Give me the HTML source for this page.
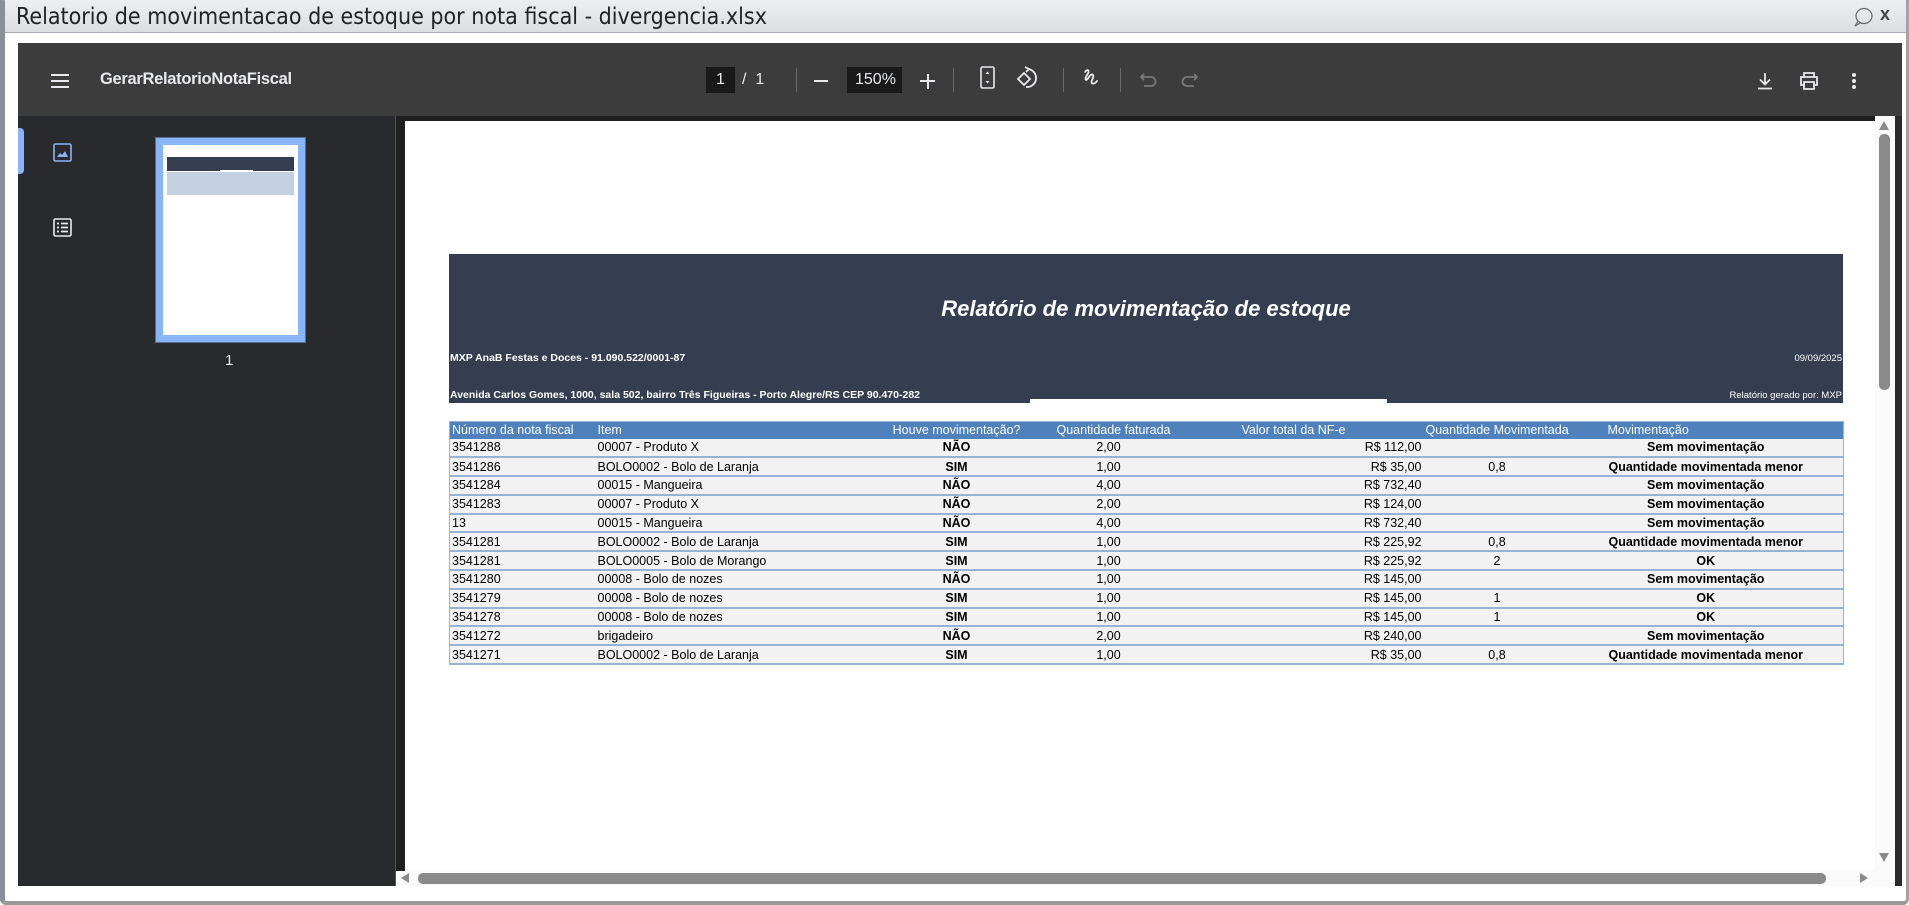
<!DOCTYPE html>
<html><head><meta charset="utf-8"><style>
*{margin:0;padding:0;box-sizing:border-box}
body{width:1909px;height:905px;overflow:hidden;background:#fff;font-family:"Liberation Sans",sans-serif;position:relative}
.abs{position:absolute}
.tb{color:#e8eaed;font-size:15px}
.sep{position:absolute;top:68px;width:1px;height:24px;background:#6a6a6a}
.cal{font-family:"Liberation Sans Narrow","Liberation Sans",sans-serif}
table{border-collapse:collapse;table-layout:fixed}
td{height:18.8px;font-size:12.5px;color:#000;background:#f2f2f2;border-bottom:2px solid #95b3d7;padding:0 2px;white-space:nowrap;line-height:16px}
th{height:17px;font-size:12.5px;color:#fff;background:#4f81bd;font-weight:normal;text-align:left;padding:0 2px;white-space:nowrap}
.c{text-align:center}.r{text-align:right;padding-right:4px}.b{font-weight:bold}
</style></head><body>
<div class="abs" style="left:0;top:0;width:1909px;height:905px;border:1px solid #9aa0a6;border-left:5px solid #8a9099;border-bottom:4px solid #9a9a9a;border-right:3px solid #a0a4a8;border-radius:0 0 6px 6px"></div>
<div class="abs" style="left:5px;top:0;width:1901px;height:33px;background:linear-gradient(#eceef0,#dcdfe2);border-bottom:1px solid #a8adb3"></div>
<div class="abs" style="left:16px;top:4px;font-size:23px;color:#222;font-family:'DejaVu Sans Condensed','DejaVu Sans',sans-serif">Relatorio de movimentacao de estoque por nota fiscal - divergencia.xlsx</div>
<svg class="abs" style="left:1852px;top:6px" width="22" height="22" viewBox="0 0 22 22"><ellipse cx="12" cy="10" rx="8" ry="7.5" fill="none" stroke="#666" stroke-width="1.2"/><path d="M6 15 L3 20 L9 16.5" fill="none" stroke="#666" stroke-width="1.2"/></svg>
<div class="abs" style="left:1880px;top:4px;font-size:18px;font-weight:bold;color:#444">x</div>

<div class="abs" style="left:18px;top:43px;width:1884px;height:843px;background:#282a2d"></div>
<div class="abs" style="left:18px;top:43px;width:1884px;height:73px;background:#3c3c3c"></div>
<div class="abs" style="left:51px;top:74px;width:18px;height:2px;background:#e8eaed;box-shadow:0 6px 0 #e8eaed,0 12px 0 #e8eaed"></div>
<div class="abs tb" style="left:100px;top:70px;font-weight:bold;font-size:16.5px;letter-spacing:-0.3px">GerarRelatorioNotaFiscal</div>
<div class="abs" style="left:706px;top:67px;width:29px;height:26px;background:#191919"></div>
<div class="abs tb" style="left:716px;top:71px;font-size:16px">1</div>
<div class="abs tb" style="left:742px;top:71px;font-size:16px">/&nbsp;&nbsp;1</div>
<div class="sep" style="left:796px"></div>
<div class="abs" style="left:814px;top:80px;width:14px;height:2px;background:#e8eaed"></div>
<div class="abs" style="left:847px;top:67px;width:55px;height:26px;background:#191919"></div>
<div class="abs tb" style="left:855px;top:71px;font-size:16px">150%</div>
<div class="abs" style="left:920px;top:80px;width:15px;height:2px;background:#e8eaed"></div>
<div class="abs" style="left:926.5px;top:73.5px;width:2px;height:15px;background:#e8eaed"></div>
<div class="sep" style="left:953px"></div>
<svg class="abs" style="left:978px;top:64px" width="20" height="28" viewBox="0 0 20 28"><rect x="3" y="3" width="13" height="21" rx="1.5" fill="none" stroke="#e8eaed" stroke-width="1.6"/><path d="M7.5 10 L9.5 7.5 L11.5 10Z M7.5 17 L9.5 19.5 L11.5 17Z" fill="#e8eaed"/></svg>
<svg class="abs" style="left:1014px;top:64px" width="28" height="28" viewBox="0 0 28 28"><path d="M4 15 L10 9 L16 15 L10 21Z" fill="none" stroke="#e8eaed" stroke-width="1.8"/><path d="M14 5 A9 9 0 1 1 12 23" fill="none" stroke="#e8eaed" stroke-width="1.8"/><path d="M11 3 L15 5 L12 8" fill="none" stroke="#e8eaed" stroke-width="1.8"/></svg>
<div class="sep" style="left:1063px"></div>
<svg class="abs" style="left:1080px;top:66px" width="24" height="24" viewBox="0 0 24 24"><path d="M5 6 C8 2 10 5 7 9 C4 14 6 16 9 11 C12 6 15 9 12 14 C10 18 14 19 17 15" fill="none" stroke="#e8eaed" stroke-width="1.8" stroke-linecap="round"/></svg>
<div class="sep" style="left:1120px"></div>
<svg class="abs" style="left:1138px;top:70px" width="22" height="20" viewBox="0 0 22 20"><path d="M6 4 L3 7 L6 10 M3 7 H13 A4.5 4.5 0 0 1 13 16 H6" fill="none" stroke="#777" stroke-width="1.8"/></svg>
<svg class="abs" style="left:1178px;top:70px" width="22" height="20" viewBox="0 0 22 20"><path d="M16 4 L19 7 L16 10 M19 7 H9 A4.5 4.5 0 0 0 9 16 H16" fill="none" stroke="#777" stroke-width="1.8"/></svg>
<svg class="abs" style="left:1754px;top:70px" width="22" height="22" viewBox="0 0 22 22"><path d="M11 3 V14 M6 9.5 L11 14.5 L16 9.5 M4 18.5 H18" fill="none" stroke="#e8eaed" stroke-width="1.8"/></svg>
<svg class="abs" style="left:1798px;top:70px" width="22" height="22" viewBox="0 0 22 22"><path d="M6 7 V3 H16 V7 M6 15 H3 V7 H19 V15 H16 M6 12 H16 V19 H6Z" fill="none" stroke="#e8eaed" stroke-width="1.8"/></svg>
<div class="abs" style="left:1852px;top:73px;width:4px;height:4px;border-radius:2px;background:#e8eaed;box-shadow:0 6px 0 #e8eaed,0 12px 0 #e8eaed"></div>

<div class="abs" style="left:18px;top:128px;width:6px;height:46px;background:#8ab4f8;border-radius:0 4px 4px 0"></div>
<svg class="abs" style="left:53px;top:143px" width="19" height="19" viewBox="0 0 19 19"><rect x="1" y="1" width="17" height="17" rx="1.5" fill="none" stroke="#8ab4f8" stroke-width="1.6"/><path d="M4 14 L7 10 L9 12 L12 8 L15 14Z" fill="#8ab4f8"/></svg>
<svg class="abs" style="left:53px;top:218px" width="19" height="19" viewBox="0 0 19 19"><rect x="1" y="1" width="17" height="17" rx="1.5" fill="none" stroke="#e8eaed" stroke-width="1.6"/><path d="M4 5.5 H6 M8 5.5 H15 M4 9.5 H6 M8 9.5 H15 M4 13.5 H6 M8 13.5 H15" stroke="#e8eaed" stroke-width="1.8"/></svg>
<div class="abs" style="left:155px;top:137px;width:151px;height:206px;background:#8ab4f8;border:1px solid #5a6a88"></div>
<div class="abs" style="left:163px;top:145px;width:135px;height:190px;background:#fff"></div>
<div class="abs" style="left:167px;top:157px;width:127px;height:14px;background:#343e50"></div>
<div class="abs" style="left:220px;top:170px;width:33px;height:1px;background:#fff"></div>
<div class="abs" style="left:167px;top:172px;width:127px;height:23px;background:#c3d0e2"></div>
<div class="abs" style="left:225px;top:352px;color:#e8eaed;font-size:15px">1</div>
<div class="abs" style="left:395px;top:116px;width:1px;height:770px;background:#555"></div>
<div class="abs" style="left:396px;top:116px;width:1480px;height:755px;background:#1f1f1f"></div>

<div class="abs" style="left:405px;top:121px;width:1470px;height:750px;background:#fff"></div>
<div class="abs" style="left:449px;top:254px;width:1394px;height:149px;background:#343e50"></div>
<div class="abs" style="left:1030px;top:399px;width:357px;height:4px;background:#fff"></div>
<div class="abs" style="left:449px;top:296px;width:1394px;text-align:center;color:#fff;font-size:22px;font-weight:bold;font-style:italic">Relatório de movimentação de estoque</div>
<div class="abs cal" style="left:450px;top:352px;color:#fff;font-size:10.5px;font-weight:bold">MXP AnaB Festas e Doces - 91.090.522/0001-87</div>
<div class="abs cal" style="left:450px;top:389px;color:#fff;font-size:10.5px;font-weight:bold">Avenida Carlos Gomes, 1000, sala 502, bairro Três Figueiras - Porto Alegre/RS CEP 90.470-282</div>
<div class="abs cal" style="right:67px;top:353px;color:#fff;font-size:9.5px">09/09/2025</div>
<div class="abs cal" style="right:67px;top:390px;color:#fff;font-size:9.5px">Relatório gerado por: MXP</div>

<table class="abs cal" style="left:449px;top:421px;width:1394px;border:1px solid #95b3d7">
<colgroup><col style="width:146px"><col style="width:285px"><col style="width:152px"><col style="width:152px"><col style="width:241px"><col style="width:143px"><col style="width:275px"></colgroup>
<tr><th>Número da nota fiscal</th><th>Item</th><th style="text-align:right;padding-right:12px">Houve movimentação?</th><th style="padding-left:24px">Quantidade faturada</th><th style="padding-left:57px">Valor total da NF-e</th><th style="padding-left:0">Quantidade Movimentada</th><th style="padding-left:39px">Movimentação</th></tr>
<tr><td>3541288</td><td>00007 - Produto X</td><td class="c b">NÃO</td><td class="c">2,00</td><td class="r">R$ 112,00</td><td class="c"></td><td class="c b">Sem movimentação</td></tr>
<tr><td>3541286</td><td>BOLO0002 - Bolo de Laranja</td><td class="c b">SIM</td><td class="c">1,00</td><td class="r">R$ 35,00</td><td class="c">0,8</td><td class="c b">Quantidade movimentada menor</td></tr>
<tr><td>3541284</td><td>00015 - Mangueira</td><td class="c b">NÃO</td><td class="c">4,00</td><td class="r">R$ 732,40</td><td class="c"></td><td class="c b">Sem movimentação</td></tr>
<tr><td>3541283</td><td>00007 - Produto X</td><td class="c b">NÃO</td><td class="c">2,00</td><td class="r">R$ 124,00</td><td class="c"></td><td class="c b">Sem movimentação</td></tr>
<tr><td>13</td><td>00015 - Mangueira</td><td class="c b">NÃO</td><td class="c">4,00</td><td class="r">R$ 732,40</td><td class="c"></td><td class="c b">Sem movimentação</td></tr>
<tr><td>3541281</td><td>BOLO0002 - Bolo de Laranja</td><td class="c b">SIM</td><td class="c">1,00</td><td class="r">R$ 225,92</td><td class="c">0,8</td><td class="c b">Quantidade movimentada menor</td></tr>
<tr><td>3541281</td><td>BOLO0005 - Bolo de Morango</td><td class="c b">SIM</td><td class="c">1,00</td><td class="r">R$ 225,92</td><td class="c">2</td><td class="c b">OK</td></tr>
<tr><td>3541280</td><td>00008 - Bolo de nozes</td><td class="c b">NÃO</td><td class="c">1,00</td><td class="r">R$ 145,00</td><td class="c"></td><td class="c b">Sem movimentação</td></tr>
<tr><td>3541279</td><td>00008 - Bolo de nozes</td><td class="c b">SIM</td><td class="c">1,00</td><td class="r">R$ 145,00</td><td class="c">1</td><td class="c b">OK</td></tr>
<tr><td>3541278</td><td>00008 - Bolo de nozes</td><td class="c b">SIM</td><td class="c">1,00</td><td class="r">R$ 145,00</td><td class="c">1</td><td class="c b">OK</td></tr>
<tr><td>3541272</td><td>brigadeiro</td><td class="c b">NÃO</td><td class="c">2,00</td><td class="r">R$ 240,00</td><td class="c"></td><td class="c b">Sem movimentação</td></tr>
<tr><td>3541271</td><td>BOLO0002 - Bolo de Laranja</td><td class="c b">SIM</td><td class="c">1,00</td><td class="r">R$ 35,00</td><td class="c">0,8</td><td class="c b">Quantidade movimentada menor</td></tr>
</table>

<div class="abs" style="left:1875px;top:116px;width:20px;height:770px;background:#fafafa"></div>
<div class="abs" style="left:1879px;top:134px;width:11px;height:256px;background:#8a8a8a;border-radius:5px"></div>
<div class="abs" style="left:1879px;top:121px;width:0;height:0;border-left:5.5px solid transparent;border-right:5.5px solid transparent;border-bottom:9px solid #8a8a8a"></div>
<div class="abs" style="left:1879px;top:853px;width:0;height:0;border-left:5.5px solid transparent;border-right:5.5px solid transparent;border-top:9px solid #8a8a8a"></div>
<div class="abs" style="left:396px;top:871px;width:1479px;height:15px;background:#fafafa"></div>
<div class="abs" style="left:418px;top:873px;width:1408px;height:11px;background:#8a8a8a;border-radius:5px"></div>
<div class="abs" style="left:401px;top:873px;width:0;height:0;border-top:5.5px solid transparent;border-bottom:5.5px solid transparent;border-right:8px solid #8a8a8a"></div>
<div class="abs" style="left:1860px;top:873px;width:0;height:0;border-top:5.5px solid transparent;border-bottom:5.5px solid transparent;border-left:8px solid #8a8a8a"></div>
</body></html>
